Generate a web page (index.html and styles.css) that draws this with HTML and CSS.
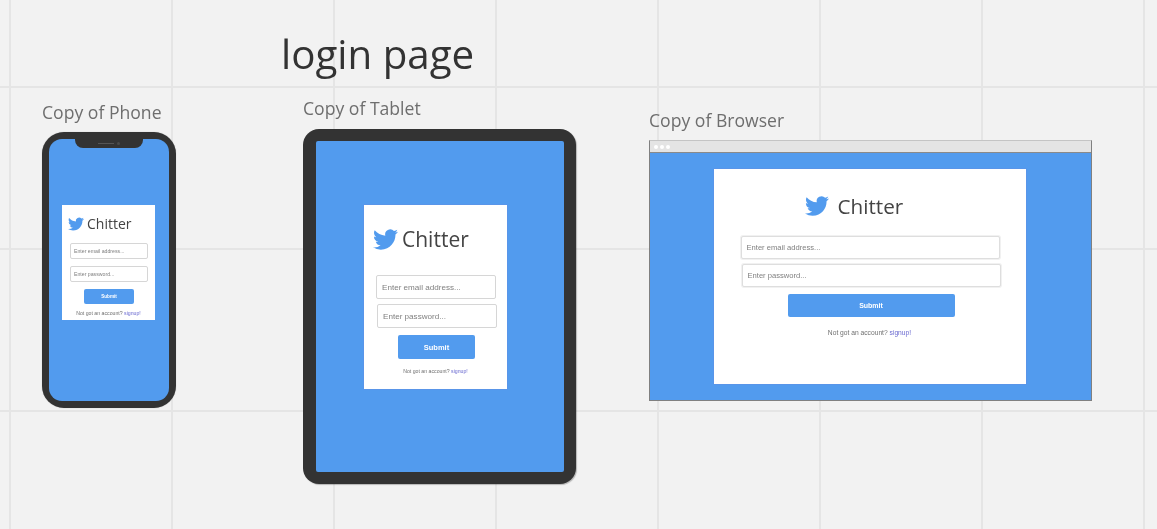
FILE: index.html
```html
<!DOCTYPE html>
<html>
<head>
    <title>login page</title>
    <link rel="stylesheet" href="styles.css">
</head>
<body>
    <svg class="sprite" width="0" height="0">
        <symbol id="bird" viewBox="0 0 24 24">
            <path d="M23.953 4.57a10 10 0 01-2.825.775 4.958 4.958 0 002.163-2.723c-.951.555-2.005.959-3.127 1.184a4.92 4.92 0 00-8.384 4.482C7.69 8.095 4.067 6.13 1.64 3.162a4.822 4.822 0 00-.666 2.475c0 1.71.87 3.213 2.188 4.096a4.904 4.904 0 01-2.228-.616v.06a4.923 4.923 0 003.946 4.827 4.996 4.996 0 01-2.212.085 4.936 4.936 0 004.604 3.417 9.867 9.867 0 01-6.102 2.105c-.39 0-.779-.023-1.17-.067a13.995 13.995 0 007.557 2.209c9.053 0 13.998-7.496 13.998-13.985 0-.21 0-.42-.015-.63A9.935 9.935 0 0024 4.59z"/>
        </symbol>
    </svg>
    <div class="canvas">
        <h1 class="page-title">login page</h1>

        <div class="board phone-board">
            <div class="board-label">Copy of Phone</div>
            <div class="phone">
                <div class="notch"><span class="speaker"></span><span class="camera"></span></div>
                <div class="screen">
                    <div class="card">
                        <div class="logo">
                            <svg class="bird"><use href="#bird"/></svg>
                            <span class="logo-text">Chitter</span>
                        </div>
                        <div class="field">Enter email address...</div>
                        <div class="field second">Enter password...</div>
                        <div class="submit">Submit</div>
                        <p class="note">Not got an account? <a href="#">signup!</a></p>
                    </div>
                </div>
            </div>
        </div>

        <div class="board tablet-board">
            <div class="board-label">Copy of Tablet</div>
            <div class="tablet">
                <div class="screen">
                    <div class="card">
                        <div class="logo">
                            <svg class="bird"><use href="#bird"/></svg>
                            <span class="logo-text">Chitter</span>
                        </div>
                        <div class="field">Enter email address...</div>
                        <div class="field second">Enter password...</div>
                        <div class="submit">Submit</div>
                        <p class="note">Not got an account? <a href="#">signup!</a></p>
                    </div>
                </div>
            </div>
        </div>

        <div class="board browser-board">
            <div class="board-label">Copy of Browser</div>
            <div class="browser">
                <div class="titlebar"><span></span><span></span><span></span></div>
                <div class="screen">
                    <div class="card">
                        <div class="logo">
                            <svg class="bird"><use href="#bird"/></svg>
                            <span class="logo-text">Chitter</span>
                        </div>
                        <div class="field">Enter email address...</div>
                        <div class="field second">Enter password...</div>
                        <div class="submit">Submit</div>
                        <p class="note">Not got an account? <a href="#">signup!</a></p>
                    </div>
                </div>
            </div>
        </div>
    </div>
</body>
</html>
```

FILE: styles.css
```css
html, body {
    margin: 0;
    padding: 0;
}
body {
    background: #f2f2f2;
    font-family: "Liberation Sans", Arial, sans-serif;
    overflow: hidden;
}
.sprite {
    position: absolute;
}

/* the whiteboard with its grid */
.canvas {
    position: relative;
    width: 1157px;
    height: 529px;
    overflow: hidden;
    background-color: #f2f2f2;
    background-image:
        linear-gradient(to right, #e5e5e5 2px, transparent 2px),
        linear-gradient(to bottom, #e5e5e5 2px, transparent 2px);
    background-size: 162px 162px;
    background-position: 9px 86px;
    filter: blur(0.3px);
}
.page-title {
    position: absolute;
    left: 281px;
    top: 25px;
    margin: 0;
    font-family: "Open Sans", sans-serif;
    font-size: 40.3px;
    font-weight: 400;
    line-height: 57px;
    color: #333;
}
.board {
    position: absolute;
}
.board-label {
    font-family: "Open Sans", sans-serif;
    font-size: 17.6px;
    line-height: 24px;
    color: #6e6e6e;
    white-space: nowrap;
}

.screen {
    display: flex;
    align-items: flex-start;
    justify-content: center;
    background: #529bee;
}
.card {
    box-sizing: border-box;
    display: flex;
    flex-direction: column;
    background: #fff;
}
.logo {
    display: flex;
    align-items: center;
}
.bird {
    fill: #529bee;
    flex: none;
}
.logo-text {
    font-family: "Open Sans", sans-serif;
    color: #444;
}
.field {
    box-sizing: border-box;
    display: flex;
    align-items: center;
    background: #fff;
    border: 1px solid #d6d6d6;
    border-radius: 2px;
    color: #808080;
}
.submit {
    display: flex;
    align-items: center;
    justify-content: center;
    background: #529bee;
    border-radius: 2px;
    color: #fff;
    font-weight: 700;
}
.note {
    margin: 0;
    text-align: center;
    color: #707070;
}
.note a {
    color: #6a6ad0;
    text-decoration: none;
}

/* phone */
.phone-board {
    left: 42px;
    top: 100px;
}
.phone {
    position: relative;
    box-sizing: border-box;
    width: 134px;
    height: 276px;
    margin-top: 8px;
    padding: 7px;
    background: #333;
    border-radius: 22px;
    box-shadow: 0 0 1px rgba(0, 0, 0, .3);
}
.phone .screen {
    height: 262px;
    padding-top: 66px;
    padding-right: 1px;
    box-sizing: border-box;
    border-radius: 13px;
}
.notch {
    position: absolute;
    left: 33px;
    top: 7px;
    width: 68px;
    height: 9px;
    display: flex;
    align-items: center;
    justify-content: center;
    gap: 3px;
    background: #333;
    border-radius: 0 0 8px 8px;
}
.speaker {
    width: 16px;
    height: 1px;
    background: #555;
}
.camera {
    width: 3px;
    height: 3px;
    border-radius: 50%;
    background: #4a4a4a;
}
.phone .card {
    width: 93px;
    height: 115px;
    padding: 9px 7px 0 8px;
}
.phone .logo {
    height: 20px;
    margin-left: -2px;
    gap: 3px;
}
.phone .bird {
    width: 16px;
    height: 16px;
}
.phone .logo-text {
    font-size: 14px;
    line-height: 18px;
    margin-top: -1px;
}
.phone .field {
    width: 78px;
    height: 16px;
    margin-top: 9px;
    padding-left: 3px;
    font-size: 5.2px;
}
.phone .second {
    margin-top: 7px;
}
.phone .submit {
    width: 50px;
    height: 15px;
    margin: 7px 0 0 14px;
    font-size: 4.6px;
}
.phone .note {
    margin: 6px 0 0 -1px;
    font-size: 5.2px;
    line-height: 7px;
    white-space: nowrap;
}

/* tablet */
.tablet-board {
    left: 303px;
    top: 96px;
}
.tablet {
    box-sizing: border-box;
    width: 273px;
    height: 355px;
    margin-top: 9px;
    padding: 12px 12px 12px 13px;
    background: #333;
    border-radius: 16px;
    box-shadow: 1px 1px 1px rgba(0, 0, 0, .25);
}
.tablet .screen {
    height: 331px;
    padding-top: 64px;
    padding-right: 9px;
    box-sizing: border-box;
    border-radius: 2px;
}
.tablet .card {
    width: 143px;
    height: 184px;
    padding: 22px 0 0 12px;
    box-shadow: 0 0 1px #7d7fd0;
}
.tablet .logo {
    height: 24px;
    margin-left: -3px;
    gap: 4px;
}
.tablet .bird {
    width: 25px;
    height: 25px;
}
.tablet .logo-text {
    font-size: 21px;
}
.tablet .field {
    width: 120px;
    height: 24px;
    margin-top: 24px;
    padding-left: 5px;
    font-size: 8.1px;
}
.tablet .second {
    margin: 5px 0 0 1px;
}
.tablet .submit {
    width: 77px;
    height: 24px;
    margin: 7px 0 0 22px;
    font-size: 7.5px;
}
.tablet .note {
    margin: 8px 0 0 -12px;
    font-size: 5.2px;
    line-height: 8px;
}

/* browser */
.browser-board {
    left: 649px;
    top: 108px;
}
.browser {
    box-sizing: border-box;
    width: 443px;
    height: 261px;
    margin-top: 8px;
    border: 1px solid #808080;
    border-top-color: #c4c4c4;
    background: #e4e4e4;
}
.titlebar {
    box-sizing: border-box;
    height: 12px;
    padding-left: 4px;
    display: flex;
    align-items: center;
    gap: 2px;
    border-bottom: 1px solid #8a8a8a;
}
.titlebar span {
    width: 4px;
    height: 4px;
    border-radius: 50%;
    background: #fff;
}
.browser .screen {
    height: 247px;
    padding-top: 16px;
    padding-right: 2px;
    box-sizing: border-box;
}
.browser .card {
    width: 312px;
    height: 215px;
    padding: 25px 0 0 27px;
    box-shadow: 0 0 1px #7d7fd0;
}
.browser .logo {
    height: 24px;
    margin-left: 64px;
    gap: 9px;
}
.browser .bird {
    width: 24px;
    height: 24px;
}
.browser .logo-text {
    font-size: 20.7px;
}
.browser .field {
    width: 259px;
    height: 23px;
    margin-top: 18px;
    padding-left: 5px;
    font-size: 7.6px;
    border-color: #dedede;
    box-shadow: 0 0 0 1px #f1f1f1;
}
.browser .second {
    margin: 5px 0 0 1px;
}
.browser .submit {
    width: 167px;
    height: 23px;
    margin: 7px 0 0 47px;
    font-size: 7px;
}
.browser .note {
    margin: 12px 0 0 -27px;
    font-size: 6.7px;
    line-height: 8px;
}
```
